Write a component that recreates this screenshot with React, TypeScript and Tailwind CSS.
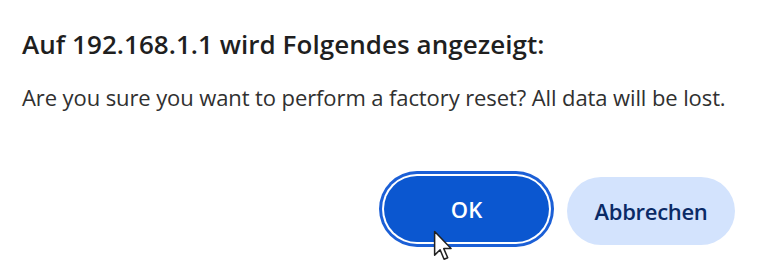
export default function App() {
  return (
    <main className="relative h-[272px] w-[761px] bg-white font-['Open_Sans',sans-serif] text-[#1f1f1f]">
      <div className="flex flex-col px-[22px] pt-[27px]">
        <h1 className="text-[26px] font-semibold leading-[34px] tracking-[0.05px]">Auf 192.168.1.1 wird Folgendes angezeigt:</h1>
        <p className="mt-[22px] text-[22px] leading-[28px] tracking-[-0.1px] text-[#303030]">
          Are you sure you want to perform a factory reset? All data will be lost.
        </p>
      </div>
      <div className="mt-[65px] flex items-start justify-end gap-[18px] pr-[26px]">
        <button className="h-[66px] w-[165px] rounded-full bg-[#0b57d0] text-[22px] font-semibold text-white ring-[3px] ring-[#1b5fd6] ring-offset-2 ring-offset-white">
          OK
        </button>
        <button className="mt-[1px] h-[68px] w-[168px] rounded-full bg-[#d3e3fd] text-[22px] font-semibold tracking-[-0.3px] text-[#0a2a66]">
          Abbrechen
        </button>
      </div>
      <svg className="absolute left-[433px] top-[230px]" width="20" height="32" viewBox="0 0 13 21">
        <path d="M1 1 L1 16.5 L4.6 13 L7.2 19.2 L9.6 18.2 L7 12.2 L11.8 12.2 Z" fill="#fff" stroke="#222" strokeWidth="1" strokeLinejoin="round" />
      </svg>
    </main>
  );
}
